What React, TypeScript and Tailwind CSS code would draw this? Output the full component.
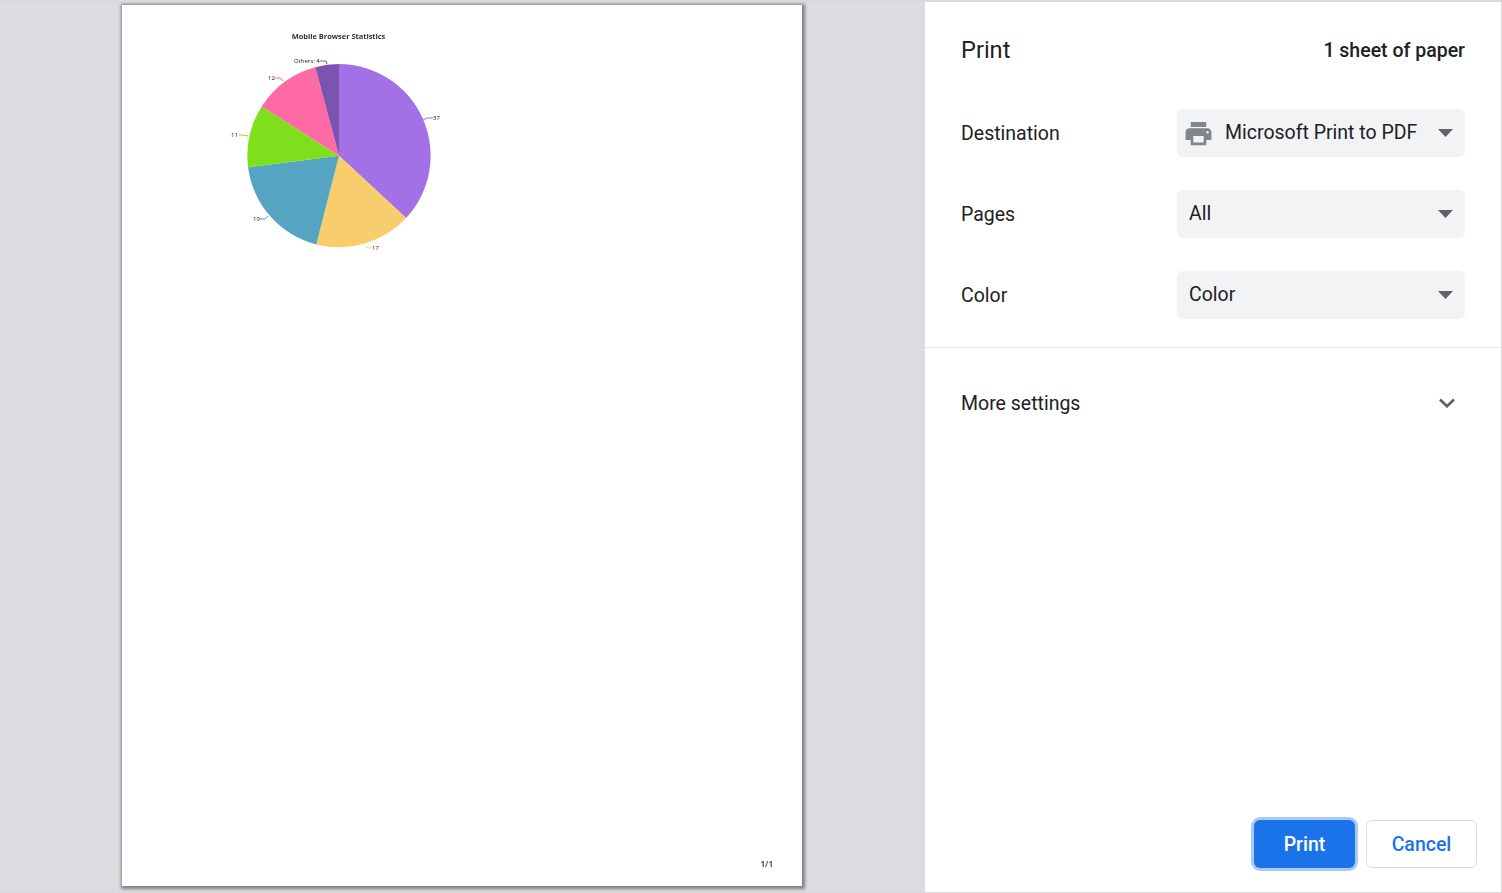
import React from "react";

const CX = 339 - 122;
const CY = 155.7 - 5;
const R = 91.6;

function pt(deg: number, r = R): [number, number] {
  const a = (deg * Math.PI) / 180;
  return [CX + r * Math.sin(a), CY - r * Math.cos(a)];
}

const slices = [
  { v: 36.9, c: "#a370e6" },
  { v: 17.1, c: "#f8cd6b" },
  { v: 19, c: "#55a4c2" },
  { v: 11, c: "#7ee01d" },
  { v: 11.83, c: "#ff6aa5" },
  { v: 4.17, c: "#7a54ae" },
];

function Pie() {
  let acc = 0;
  return (
    <>
      {slices.map((s) => {
        const a0 = acc * 3.6;
        acc += s.v;
        const a1 = acc * 3.6;
        const [x0, y0] = pt(a0);
        const [x1, y1] = pt(a1);
        return (
          <path
            key={s.c}
            d={`M${CX} ${CY}L${x0} ${y0}A${R} ${R} 0 ${a1 - a0 > 180 ? 1 : 0} 1 ${x1} ${y1}Z`}
            fill={s.c}
          />
        );
      })}
    </>
  );
}

const off = (x: number, y: number) => `${x - 122},${y - 5}`;

const connectors = [
  { c: "#a370e6", p: [[423, 120], [427, 118], [433, 118]] },
  { c: "#f8cd6b", p: [[365, 246], [368, 248], [372, 248]] },
  { c: "#55a4c2", p: [[268, 216], [265, 219], [260, 219]] },
  { c: "#7ee01d", p: [[248, 136], [243, 135], [239, 135]] },
  { c: "#ff6aa5", p: [[283, 81], [280, 78], [275, 78]] },
  { c: "#7a54ae", p: [[327, 64], [326, 61], [320, 61]] },
];

const labels = [
  { t: "37", x: 433, y: 120 },
  { t: "17", x: 372, y: 250 },
  { t: "19", x: 253, y: 221 },
  { t: "11", x: 231, y: 137 },
  { t: "12", x: 268, y: 80 },
  { t: "Others: 4", x: 294, y: 63 },
];

function Chart() {
  return (
    <svg width="680" height="260" className="block blur-[0.4px]">
      <text
        x={338.5 - 122}
        y={38.6 - 5}
        textAnchor="middle"
        fontSize="7.5"
        fontWeight="700"
        fill="#333333"
        fontFamily="'Open Sans', sans-serif"
        letterSpacing="-0.05"
      >
        Mobile Browser Statistics
      </text>
      <Pie />
      {connectors.map((k) => (
        <polyline
          key={k.c}
          points={k.p.map(([x, y]) => off(x, y)).join(" ")}
          fill="none"
          stroke={k.c}
          strokeWidth="1"
        />
      ))}
      {labels.map((l) => (
        <text
          key={l.t}
          x={l.x - 122}
          y={l.y - 5}
          fontSize="6"
          fill="#222222"
          fontFamily="'Open Sans', sans-serif"
        >
          {l.t}
        </text>
      ))}
    </svg>
  );
}

function Caret() {
  return (
    <svg width="15" height="8" viewBox="0 0 15 8" className="shrink-0">
      <path d="M0 0H15L7.5 8Z" fill="#5f6368" />
    </svg>
  );
}

function PrinterIcon() {
  return (
    <svg width="31" height="31" viewBox="0 0 24 24" className="shrink-0">
      <path
        fill="#80868b"
        d="M19 8H5c-1.66 0-3 1.34-3 3v6h4v4h12v-4h4v-6c0-1.66-1.34-3-3-3zm-3 11H8v-5h8v5zm3-7c-.55 0-1-.45-1-1s.45-1 1-1 1 .45 1 1-.45 1-1 1zm-1-9H6v4h12V3z"
      />
    </svg>
  );
}

function Row({ label, children }: { label: string; children: React.ReactNode }) {
  return (
    <div className="flex items-center h-[48px]">
      <div className="w-[216px] pt-[2px] text-[19.5px] text-[#202124]">{label}</div>
      {children}
    </div>
  );
}

function Select({ text, icon }: { text: string; icon?: boolean }) {
  return (
    <div
      className={`w-[288px] h-[48px] rounded-[6px] bg-[#f1f3f4] flex items-center justify-between pr-[12px] ${
        icon ? "pl-[6px]" : "pl-[12px]"
      }`}
    >
      <div className="flex items-center gap-[11px]">
        {icon && <PrinterIcon />}
        <span className="text-[19.5px] text-[#202124] leading-none">{text}</span>
      </div>
      <Caret />
    </div>
  );
}

export default function App() {
  return (
    <div
      className="w-[1502px] h-[893px] flex bg-white overflow-hidden border-t-2 border-b border-r border-[#d9d9d9]"
      style={{ fontFamily: "Roboto, sans-serif" }}
    >
      <div className="w-[925px] h-full bg-[#dadce0] pl-[122px] pt-[3px] shrink-0">
        <div className="w-[680px] h-[881px] bg-white shadow-[1px_1px_3px_2px_rgba(0,0,0,0.42)] flex flex-col justify-between">
          <Chart />
          <div
            className="self-end pr-[29px] pb-[16px] text-[8px] font-bold text-[#555] blur-[0.4px]"
            style={{ fontFamily: "'Open Sans', sans-serif" }}
          >
            1/1
          </div>
        </div>
      </div>
      <div className="flex-1 h-full flex flex-col">
        <div className="pl-[36px] pr-[36px] border-b border-[#e3e5e8] h-[346px]">
          <div className="flex items-center justify-between h-[32px] mt-[33px] mb-[42px]">
            <span className="text-[23.6px] text-[#202124]">Print</span>
            <span className="text-[19.5px] font-medium text-[#202124]">1 sheet of paper</span>
          </div>
          <div className="flex flex-col gap-[33px]">
            <Row label="Destination">
              <Select text="Microsoft Print to PDF" icon />
            </Row>
            <Row label="Pages">
              <Select text="All" />
            </Row>
            <Row label="Color">
              <Select text="Color" />
            </Row>
          </div>
        </div>
        <div className="pl-[36px] pr-[46px] flex items-center justify-between h-[110px] text-[19.5px] text-[#202124]">
          <span className="pt-[2px]">More settings</span>
          <svg width="16" height="10" viewBox="0 0 16 10" fill="none">
            <path d="M1 1.5L8 8.3L15 1.5" stroke="#5f6368" strokeWidth="2.6" />
          </svg>
        </div>
        <div className="flex-1 flex items-end justify-end gap-[11px] pr-[24px] pb-[24px]">
          <button className="w-[101px] h-[48px] pt-[2px] rounded-[6px] bg-[#1a73e8] text-white text-[19.5px] font-medium ring-[3px] ring-[#a9caf5]">
            Print
          </button>
          <button className="w-[111px] h-[48px] pt-[2px] rounded-[6px] bg-white border border-[#dadce0] text-[#1a73e8] text-[19.5px] font-medium">
            Cancel
          </button>
        </div>
      </div>
    </div>
  );
}
